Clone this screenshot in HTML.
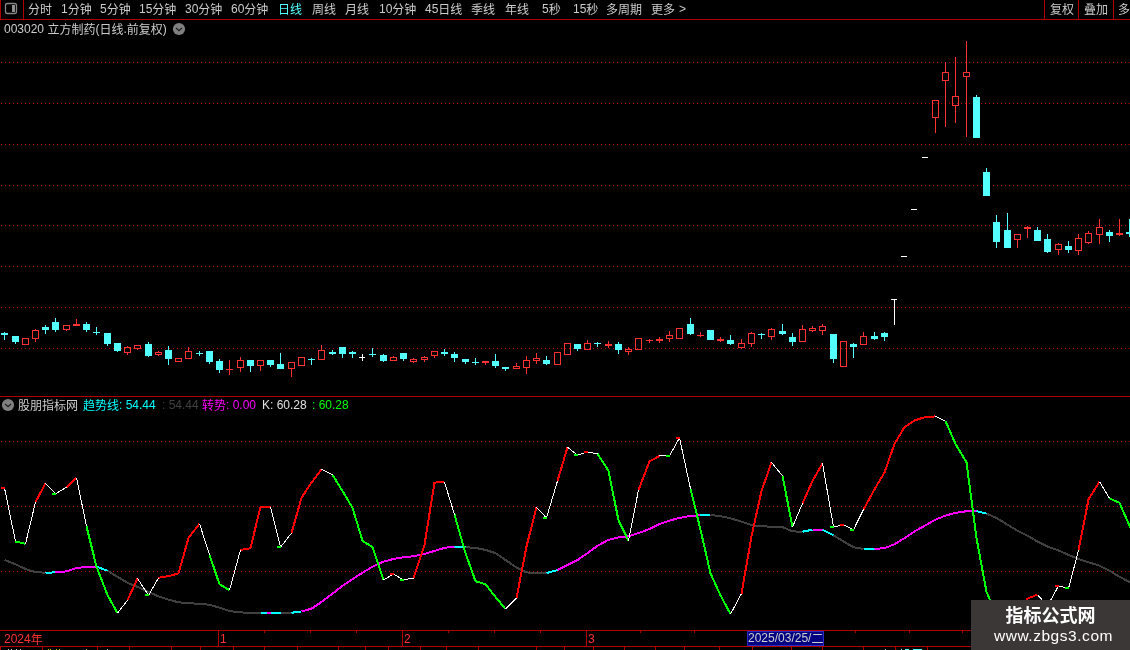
<!DOCTYPE html><html><head><meta charset="utf-8"><title>chart</title><style>
html,body{margin:0;padding:0;background:#000;}
body{width:1130px;height:650px;position:relative;overflow:hidden;font-family:"Liberation Sans","Noto Sans CJK SC",sans-serif;font-size:12px;color:#cccccc;}
.t{position:absolute;white-space:nowrap;line-height:14px;height:14px;}
.z{position:relative;top:1px;}
.wm{position:absolute;left:971px;top:600px;width:159px;height:50px;background:#3b3737;}
.wm1{position:absolute;left:0;width:159px;top:5px;text-align:center;font-size:18px;line-height:22px;font-weight:bold;color:#fff;}
.wm2{position:absolute;left:3px;width:159px;top:27px;text-align:center;font-size:15.5px;letter-spacing:0.55px;line-height:18px;color:#fff;}
.date{position:absolute;left:747px;top:631px;width:75px;height:13px;background:#000080;border:1px solid #2828c8;color:#d0d0d0;line-height:13px;white-space:nowrap;}
</style></head><body>
<svg width="1130" height="650" viewBox="0 0 1130 650" shape-rendering="crispEdges" style="position:absolute;left:0;top:0">
<line x1="1" y1="62.5" x2="1130" y2="62.5" stroke="#b00000" stroke-width="1" stroke-dasharray="1 3"/>
<line x1="1" y1="103.5" x2="1130" y2="103.5" stroke="#b00000" stroke-width="1" stroke-dasharray="1 3"/>
<line x1="1" y1="144.5" x2="1130" y2="144.5" stroke="#b00000" stroke-width="1" stroke-dasharray="1 3"/>
<line x1="1" y1="185.5" x2="1130" y2="185.5" stroke="#b00000" stroke-width="1" stroke-dasharray="1 3"/>
<line x1="1" y1="225.5" x2="1130" y2="225.5" stroke="#b00000" stroke-width="1" stroke-dasharray="1 3"/>
<line x1="1" y1="266.5" x2="1130" y2="266.5" stroke="#b00000" stroke-width="1" stroke-dasharray="1 3"/>
<line x1="1" y1="307.5" x2="1130" y2="307.5" stroke="#b00000" stroke-width="1" stroke-dasharray="1 3"/>
<line x1="1" y1="348.5" x2="1130" y2="348.5" stroke="#b00000" stroke-width="1" stroke-dasharray="1 3"/>
<line x1="1" y1="441.5" x2="1130" y2="441.5" stroke="#b00000" stroke-width="1" stroke-dasharray="1 3"/>
<line x1="1" y1="506.5" x2="1130" y2="506.5" stroke="#b00000" stroke-width="1" stroke-dasharray="1 3"/>
<line x1="1" y1="571.5" x2="1130" y2="571.5" stroke="#b00000" stroke-width="1" stroke-dasharray="1 3"/>
<rect x="4" y="332" width="1" height="8" fill="#54ffff"/>
<rect x="1" y="333" width="7" height="2" fill="#54ffff"/>
<rect x="15" y="336" width="1" height="8" fill="#54ffff"/>
<rect x="12" y="336" width="7" height="6" fill="#54ffff"/>
<rect x="22.5" y="338.5" width="6" height="6" fill="none" stroke="#ff3232" stroke-width="1"/>
<rect x="35" y="329" width="1" height="1" fill="#ff3232"/>
<rect x="35" y="339" width="1" height="3" fill="#ff3232"/>
<rect x="32.5" y="330.5" width="6" height="8" fill="none" stroke="#ff3232" stroke-width="1"/>
<rect x="45" y="325" width="1" height="9" fill="#54ffff"/>
<rect x="42" y="327" width="7" height="3" fill="#54ffff"/>
<rect x="55" y="318" width="1" height="14" fill="#54ffff"/>
<rect x="52" y="322" width="7" height="8" fill="#54ffff"/>
<rect x="66" y="330" width="1" height="1" fill="#ff3232"/>
<rect x="63.5" y="325.5" width="6" height="4" fill="none" stroke="#ff3232" stroke-width="1"/>
<rect x="76" y="319" width="1" height="7" fill="#ff3232"/>
<rect x="73" y="324" width="7" height="2" fill="#ff3232"/>
<rect x="86" y="322" width="1" height="10" fill="#54ffff"/>
<rect x="83" y="324" width="7" height="6" fill="#54ffff"/>
<rect x="96" y="327" width="1" height="8" fill="#54ffff"/>
<rect x="93" y="332" width="7" height="1" fill="#54ffff"/>
<rect x="107" y="333" width="1" height="13" fill="#54ffff"/>
<rect x="104" y="333" width="7" height="11" fill="#54ffff"/>
<rect x="117" y="343" width="1" height="9" fill="#54ffff"/>
<rect x="114" y="343" width="7" height="8" fill="#54ffff"/>
<rect x="127" y="346" width="1" height="1" fill="#ff3232"/>
<rect x="127" y="353" width="1" height="2" fill="#ff3232"/>
<rect x="124.5" y="347.5" width="6" height="5" fill="none" stroke="#ff3232" stroke-width="1"/>
<rect x="137" y="349" width="1" height="1" fill="#ff3232"/>
<rect x="134.5" y="345.5" width="6" height="3" fill="none" stroke="#ff3232" stroke-width="1"/>
<rect x="148" y="342" width="1" height="15" fill="#54ffff"/>
<rect x="145" y="344" width="7" height="12" fill="#54ffff"/>
<rect x="158" y="351" width="1" height="1" fill="#ff3232"/>
<rect x="158" y="355" width="1" height="1" fill="#ff3232"/>
<rect x="155.5" y="352.5" width="6" height="2" fill="none" stroke="#ff3232" stroke-width="1"/>
<rect x="168" y="346" width="1" height="19" fill="#54ffff"/>
<rect x="165" y="350" width="7" height="9" fill="#54ffff"/>
<rect x="175.5" y="358.5" width="6" height="3" fill="none" stroke="#ff3232" stroke-width="1"/>
<rect x="188" y="347" width="1" height="4" fill="#ff3232"/>
<rect x="185.5" y="351.5" width="6" height="7" fill="none" stroke="#ff3232" stroke-width="1"/>
<rect x="199" y="351" width="1" height="5" fill="#54ffff"/>
<rect x="196" y="353" width="7" height="1" fill="#54ffff"/>
<rect x="209" y="351" width="1" height="13" fill="#54ffff"/>
<rect x="206" y="351" width="7" height="11" fill="#54ffff"/>
<rect x="219" y="359" width="1" height="14" fill="#54ffff"/>
<rect x="216" y="361" width="7" height="9" fill="#54ffff"/>
<rect x="229" y="360" width="1" height="15" fill="#ff3232"/>
<rect x="226" y="369" width="7" height="1" fill="#ff3232"/>
<rect x="240" y="357" width="1" height="3" fill="#ff3232"/>
<rect x="240" y="368" width="1" height="4" fill="#ff3232"/>
<rect x="237.5" y="360.5" width="6" height="7" fill="none" stroke="#ff3232" stroke-width="1"/>
<rect x="250" y="360" width="1" height="12" fill="#54ffff"/>
<rect x="247" y="360" width="7" height="6" fill="#54ffff"/>
<rect x="260" y="366" width="1" height="5" fill="#ff3232"/>
<rect x="257.5" y="360.5" width="6" height="5" fill="none" stroke="#ff3232" stroke-width="1"/>
<rect x="270" y="360" width="1" height="7" fill="#54ffff"/>
<rect x="267" y="360" width="7" height="5" fill="#54ffff"/>
<rect x="280" y="353" width="1" height="16" fill="#54ffff"/>
<rect x="277" y="364" width="7" height="5" fill="#54ffff"/>
<rect x="291" y="369" width="1" height="8" fill="#ff3232"/>
<rect x="288.5" y="362.5" width="6" height="6" fill="none" stroke="#ff3232" stroke-width="1"/>
<rect x="298.5" y="357.5" width="6" height="8" fill="none" stroke="#ff3232" stroke-width="1"/>
<rect x="311" y="358" width="1" height="7" fill="#54ffff"/>
<rect x="308" y="359" width="7" height="1" fill="#54ffff"/>
<rect x="321" y="345" width="1" height="5" fill="#ff3232"/>
<rect x="318.5" y="350.5" width="6" height="9" fill="none" stroke="#ff3232" stroke-width="1"/>
<rect x="332" y="350" width="1" height="5" fill="#54ffff"/>
<rect x="329" y="352" width="7" height="2" fill="#54ffff"/>
<rect x="342" y="347" width="1" height="11" fill="#54ffff"/>
<rect x="339" y="347" width="7" height="7" fill="#54ffff"/>
<rect x="352" y="351" width="1" height="7" fill="#54ffff"/>
<rect x="349" y="352" width="7" height="2" fill="#54ffff"/>
<rect x="362" y="354" width="1" height="7" fill="#ffffff"/>
<rect x="359" y="357" width="6" height="1" fill="#ffffff"/>
<rect x="372" y="348" width="1" height="9" fill="#54ffff"/>
<rect x="369" y="354" width="7" height="1" fill="#54ffff"/>
<rect x="383" y="354" width="1" height="8" fill="#54ffff"/>
<rect x="380" y="355" width="7" height="6" fill="#54ffff"/>
<rect x="393" y="356" width="1" height="1" fill="#ff3232"/>
<rect x="390.5" y="357.5" width="6" height="3" fill="none" stroke="#ff3232" stroke-width="1"/>
<rect x="403" y="353" width="1" height="8" fill="#54ffff"/>
<rect x="400" y="353" width="7" height="6" fill="#54ffff"/>
<rect x="413" y="358" width="1" height="1" fill="#ff3232"/>
<rect x="413" y="362" width="1" height="1" fill="#ff3232"/>
<rect x="410.5" y="359.5" width="6" height="2" fill="none" stroke="#ff3232" stroke-width="1"/>
<rect x="424" y="356" width="1" height="1" fill="#ff3232"/>
<rect x="424" y="360" width="1" height="2" fill="#ff3232"/>
<rect x="421.5" y="357.5" width="6" height="2" fill="none" stroke="#ff3232" stroke-width="1"/>
<rect x="434" y="356" width="1" height="2" fill="#ff3232"/>
<rect x="431.5" y="351.5" width="6" height="4" fill="none" stroke="#ff3232" stroke-width="1"/>
<rect x="444" y="349" width="1" height="7" fill="#54ffff"/>
<rect x="441" y="352" width="7" height="2" fill="#54ffff"/>
<rect x="454" y="352" width="1" height="10" fill="#54ffff"/>
<rect x="451" y="354" width="7" height="4" fill="#54ffff"/>
<rect x="465" y="359" width="1" height="5" fill="#54ffff"/>
<rect x="462" y="359" width="7" height="3" fill="#54ffff"/>
<rect x="475" y="358" width="1" height="7" fill="#54ffff"/>
<rect x="472" y="362" width="7" height="1" fill="#54ffff"/>
<rect x="485" y="361" width="1" height="4" fill="#ff3232"/>
<rect x="482" y="361" width="7" height="2" fill="#ff3232"/>
<rect x="495" y="354" width="1" height="14" fill="#54ffff"/>
<rect x="492" y="361" width="7" height="5" fill="#54ffff"/>
<rect x="505" y="367" width="1" height="4" fill="#54ffff"/>
<rect x="502" y="367" width="7" height="2" fill="#54ffff"/>
<rect x="516" y="363" width="1" height="3" fill="#ff3232"/>
<rect x="513.5" y="366.5" width="6" height="2" fill="none" stroke="#ff3232" stroke-width="1"/>
<rect x="526" y="356" width="1" height="4" fill="#ff3232"/>
<rect x="526" y="368" width="1" height="6" fill="#ff3232"/>
<rect x="523.5" y="360.5" width="6" height="7" fill="none" stroke="#ff3232" stroke-width="1"/>
<rect x="536" y="353" width="1" height="5" fill="#ff3232"/>
<rect x="536" y="361" width="1" height="3" fill="#ff3232"/>
<rect x="533.5" y="358.5" width="6" height="2" fill="none" stroke="#ff3232" stroke-width="1"/>
<rect x="546" y="356" width="1" height="9" fill="#54ffff"/>
<rect x="543" y="360" width="7" height="4" fill="#54ffff"/>
<rect x="554.5" y="352.5" width="6" height="12" fill="none" stroke="#ff3232" stroke-width="1"/>
<rect x="564.5" y="343.5" width="6" height="11" fill="none" stroke="#ff3232" stroke-width="1"/>
<rect x="577" y="344" width="1" height="7" fill="#54ffff"/>
<rect x="574" y="344" width="7" height="5" fill="#54ffff"/>
<rect x="587" y="340" width="1" height="3" fill="#ff3232"/>
<rect x="584.5" y="343.5" width="6" height="6" fill="none" stroke="#ff3232" stroke-width="1"/>
<rect x="597" y="342" width="1" height="5" fill="#54ffff"/>
<rect x="594" y="343" width="7" height="1" fill="#54ffff"/>
<rect x="608" y="341" width="1" height="7" fill="#ff3232"/>
<rect x="605" y="344" width="7" height="2" fill="#ff3232"/>
<rect x="618" y="342" width="1" height="12" fill="#54ffff"/>
<rect x="615" y="344" width="7" height="6" fill="#54ffff"/>
<rect x="628" y="347" width="1" height="2" fill="#ff3232"/>
<rect x="628" y="352" width="1" height="3" fill="#ff3232"/>
<rect x="625.5" y="349.5" width="6" height="2" fill="none" stroke="#ff3232" stroke-width="1"/>
<rect x="635.5" y="338.5" width="6" height="11" fill="none" stroke="#ff3232" stroke-width="1"/>
<rect x="649" y="339" width="1" height="4" fill="#ff3232"/>
<rect x="646" y="340" width="7" height="1" fill="#ff3232"/>
<rect x="659" y="337" width="1" height="6" fill="#ff3232"/>
<rect x="656" y="339" width="7" height="2" fill="#ff3232"/>
<rect x="669" y="331" width="1" height="4" fill="#ff3232"/>
<rect x="669" y="339" width="1" height="3" fill="#ff3232"/>
<rect x="666.5" y="335.5" width="6" height="3" fill="none" stroke="#ff3232" stroke-width="1"/>
<rect x="676.5" y="328.5" width="6" height="10" fill="none" stroke="#ff3232" stroke-width="1"/>
<rect x="690" y="318" width="1" height="17" fill="#54ffff"/>
<rect x="687" y="324" width="7" height="10" fill="#54ffff"/>
<rect x="700" y="332" width="1" height="5" fill="#ff3232"/>
<rect x="697" y="335" width="7" height="1" fill="#ff3232"/>
<rect x="710" y="330" width="1" height="10" fill="#54ffff"/>
<rect x="707" y="330" width="7" height="10" fill="#54ffff"/>
<rect x="720" y="337" width="1" height="5" fill="#ff3232"/>
<rect x="717" y="339" width="7" height="2" fill="#ff3232"/>
<rect x="730" y="335" width="1" height="10" fill="#54ffff"/>
<rect x="727" y="340" width="7" height="4" fill="#54ffff"/>
<rect x="741" y="339" width="1" height="4" fill="#ff3232"/>
<rect x="741" y="348" width="1" height="1" fill="#ff3232"/>
<rect x="738.5" y="343.5" width="6" height="4" fill="none" stroke="#ff3232" stroke-width="1"/>
<rect x="751" y="332" width="1" height="1" fill="#ff3232"/>
<rect x="751" y="344" width="1" height="3" fill="#ff3232"/>
<rect x="748.5" y="333.5" width="6" height="10" fill="none" stroke="#ff3232" stroke-width="1"/>
<rect x="761" y="333" width="1" height="6" fill="#54ffff"/>
<rect x="758" y="334" width="7" height="1" fill="#54ffff"/>
<rect x="771" y="328" width="1" height="1" fill="#ff3232"/>
<rect x="771" y="337" width="1" height="3" fill="#ff3232"/>
<rect x="768.5" y="329.5" width="6" height="7" fill="none" stroke="#ff3232" stroke-width="1"/>
<rect x="782" y="324" width="1" height="11" fill="#54ffff"/>
<rect x="779" y="331" width="7" height="3" fill="#54ffff"/>
<rect x="792" y="333" width="1" height="13" fill="#54ffff"/>
<rect x="789" y="337" width="7" height="5" fill="#54ffff"/>
<rect x="802" y="325" width="1" height="4" fill="#ff3232"/>
<rect x="799.5" y="329.5" width="6" height="12" fill="none" stroke="#ff3232" stroke-width="1"/>
<rect x="812" y="326" width="1" height="2" fill="#ff3232"/>
<rect x="812" y="331" width="1" height="1" fill="#ff3232"/>
<rect x="809.5" y="328.5" width="6" height="2" fill="none" stroke="#ff3232" stroke-width="1"/>
<rect x="822" y="324" width="1" height="2" fill="#ff3232"/>
<rect x="822" y="331" width="1" height="4" fill="#ff3232"/>
<rect x="819.5" y="326.5" width="6" height="4" fill="none" stroke="#ff3232" stroke-width="1"/>
<rect x="833" y="334" width="1" height="29" fill="#54ffff"/>
<rect x="830" y="334" width="7" height="25" fill="#54ffff"/>
<rect x="840.5" y="341.5" width="6" height="25" fill="none" stroke="#ff3232" stroke-width="1"/>
<rect x="853" y="343" width="1" height="15" fill="#54ffff"/>
<rect x="850" y="344" width="7" height="3" fill="#54ffff"/>
<rect x="863" y="332" width="1" height="4" fill="#ff3232"/>
<rect x="860.5" y="336.5" width="6" height="8" fill="none" stroke="#ff3232" stroke-width="1"/>
<rect x="874" y="332" width="1" height="8" fill="#54ffff"/>
<rect x="871" y="336" width="7" height="3" fill="#54ffff"/>
<rect x="884" y="332" width="1" height="9" fill="#54ffff"/>
<rect x="881" y="333" width="7" height="4" fill="#54ffff"/>
<rect x="894" y="299" width="1" height="26" fill="#ffffff"/>
<rect x="891" y="299" width="6" height="1" fill="#ffffff"/>
<rect x="901" y="256" width="6" height="1" fill="#ffffff"/>
<rect x="911" y="209" width="6" height="1" fill="#ffffff"/>
<rect x="922" y="157" width="6" height="1" fill="#ffffff"/>
<rect x="935" y="118" width="1" height="15" fill="#ff3232"/>
<rect x="932.5" y="100.5" width="6" height="17" fill="none" stroke="#ff3232" stroke-width="1"/>
<rect x="945" y="62" width="1" height="10" fill="#ff3232"/>
<rect x="945" y="81" width="1" height="46" fill="#ff3232"/>
<rect x="942.5" y="72.5" width="6" height="8" fill="none" stroke="#ff3232" stroke-width="1"/>
<rect x="955" y="57" width="1" height="39" fill="#ff3232"/>
<rect x="955" y="106" width="1" height="17" fill="#ff3232"/>
<rect x="952.5" y="96.5" width="6" height="9" fill="none" stroke="#ff3232" stroke-width="1"/>
<rect x="966" y="41" width="1" height="31" fill="#ff3232"/>
<rect x="966" y="77" width="1" height="60" fill="#ff3232"/>
<rect x="963.5" y="72.5" width="6" height="4" fill="none" stroke="#ff3232" stroke-width="1"/>
<rect x="976" y="95" width="1" height="43" fill="#54ffff"/>
<rect x="973" y="97" width="7" height="41" fill="#54ffff"/>
<rect x="986" y="168" width="1" height="28" fill="#54ffff"/>
<rect x="983" y="172" width="7" height="24" fill="#54ffff"/>
<rect x="996" y="215" width="1" height="33" fill="#54ffff"/>
<rect x="993" y="222" width="7" height="20" fill="#54ffff"/>
<rect x="1007" y="213" width="1" height="35" fill="#54ffff"/>
<rect x="1004" y="230" width="7" height="18" fill="#54ffff"/>
<rect x="1017" y="240" width="1" height="8" fill="#ff3232"/>
<rect x="1014.5" y="234.5" width="6" height="5" fill="none" stroke="#ff3232" stroke-width="1"/>
<rect x="1027" y="226" width="1" height="12" fill="#ff3232"/>
<rect x="1024" y="227" width="7" height="2" fill="#ff3232"/>
<rect x="1037" y="227" width="1" height="14" fill="#54ffff"/>
<rect x="1034" y="230" width="7" height="11" fill="#54ffff"/>
<rect x="1047" y="234" width="1" height="19" fill="#54ffff"/>
<rect x="1044" y="239" width="7" height="13" fill="#54ffff"/>
<rect x="1058" y="243" width="1" height="1" fill="#ff3232"/>
<rect x="1058" y="250" width="1" height="5" fill="#ff3232"/>
<rect x="1055.5" y="244.5" width="6" height="5" fill="none" stroke="#ff3232" stroke-width="1"/>
<rect x="1068" y="241" width="1" height="12" fill="#54ffff"/>
<rect x="1065" y="246" width="7" height="4" fill="#54ffff"/>
<rect x="1078" y="234" width="1" height="4" fill="#ff3232"/>
<rect x="1078" y="251" width="1" height="4" fill="#ff3232"/>
<rect x="1075.5" y="238.5" width="6" height="12" fill="none" stroke="#ff3232" stroke-width="1"/>
<rect x="1088" y="231" width="1" height="2" fill="#ff3232"/>
<rect x="1088" y="243" width="1" height="1" fill="#ff3232"/>
<rect x="1085.5" y="233.5" width="6" height="9" fill="none" stroke="#ff3232" stroke-width="1"/>
<rect x="1099" y="219" width="1" height="8" fill="#ff3232"/>
<rect x="1099" y="235" width="1" height="9" fill="#ff3232"/>
<rect x="1096.5" y="227.5" width="6" height="7" fill="none" stroke="#ff3232" stroke-width="1"/>
<rect x="1109" y="230" width="1" height="12" fill="#54ffff"/>
<rect x="1106" y="232" width="7" height="4" fill="#54ffff"/>
<rect x="1119" y="219" width="1" height="17" fill="#ff3232"/>
<rect x="1116" y="233" width="7" height="2" fill="#ff3232"/>
<rect x="1129" y="219" width="1" height="18" fill="#54ffff"/>
<rect x="1126" y="232" width="7" height="2" fill="#54ffff"/>
<polyline points="4.5,560 15.5,564.3 25.5,569 35.5,572.1 45.5,572.7" fill="none" stroke="#404040" stroke-width="2" stroke-linejoin="round"/>
<polyline points="45.5,572.7 55.5,572.4" fill="none" stroke="#00ffff" stroke-width="2" stroke-linejoin="round"/>
<polyline points="55.5,572.4 66.5,571.4 76.5,568 86.5,567 96.5,566.7" fill="none" stroke="#ff00ff" stroke-width="2" stroke-linejoin="round"/>
<polyline points="96.5,566.7 107.5,570.7" fill="none" stroke="#00ffff" stroke-width="2" stroke-linejoin="round"/>
<polyline points="107.5,570.7 117.5,576.8 127.5,582.8 137.5,586.9 148.5,591.9 158.5,596.3 168.5,599.6 178.5,602.3 188.5,603 199.5,604 209.5,604.7 219.5,607.7 229.5,611.1 240.5,612.4 250.5,612.8 260.5,612.8" fill="none" stroke="#404040" stroke-width="2" stroke-linejoin="round"/>
<polyline points="260.5,612.8 270.5,612.8 280.5,612.8" fill="none" stroke="#00ffff" stroke-width="2" stroke-linejoin="round"/>
<polyline points="280.5,612.8 291.5,612.8" fill="none" stroke="#404040" stroke-width="2" stroke-linejoin="round"/>
<polyline points="291.5,612.8 301.5,611.4" fill="none" stroke="#00ffff" stroke-width="2" stroke-linejoin="round"/>
<polyline points="301.5,611.4 311.5,608.7 321.5,602 332.5,593.6 342.5,585.9 352.5,579.1 362.5,572.7 372.5,566.7 383.5,561.6 393.5,559 403.5,557.3 413.5,556.3 424.5,553.9 434.5,550.9 444.5,547.9 454.5,546.5" fill="none" stroke="#ff00ff" stroke-width="2" stroke-linejoin="round"/>
<polyline points="454.5,546.5 465.5,547.2" fill="none" stroke="#00ffff" stroke-width="2" stroke-linejoin="round"/>
<polyline points="465.5,547.2 475.5,547.9 485.5,549.9 495.5,553.2 505.5,560 516.5,567.4 526.5,572.4 536.5,573.1 546.5,573.1" fill="none" stroke="#404040" stroke-width="2" stroke-linejoin="round"/>
<polyline points="546.5,573.1 557.5,570" fill="none" stroke="#00ffff" stroke-width="2" stroke-linejoin="round"/>
<polyline points="557.5,570 567.5,565 577.5,560 587.5,553.2 597.5,545.8 608.5,539.8 618.5,537.4 628.5,536.4 638.5,533.1 649.5,529 659.5,524 669.5,520.6 679.5,517.9 690.5,515.9 700.5,515.2" fill="none" stroke="#ff00ff" stroke-width="2" stroke-linejoin="round"/>
<polyline points="700.5,515.2 710.5,514.9" fill="none" stroke="#00ffff" stroke-width="2" stroke-linejoin="round"/>
<polyline points="710.5,514.9 720.5,516.2 730.5,518.3 741.5,521.6 751.5,525 761.5,526.3 771.5,526.7 782.5,527 792.5,531.4 802.5,531.7" fill="none" stroke="#404040" stroke-width="2" stroke-linejoin="round"/>
<polyline points="802.5,531.7 812.5,529.7" fill="none" stroke="#00ffff" stroke-width="2" stroke-linejoin="round"/>
<polyline points="812.5,529.7 822.5,529.7" fill="none" stroke="#ff00ff" stroke-width="2" stroke-linejoin="round"/>
<polyline points="822.5,529.7 833.5,535.4" fill="none" stroke="#00ffff" stroke-width="2" stroke-linejoin="round"/>
<polyline points="833.5,535.4 843.5,541.5 853.5,547.2 863.5,548.9" fill="none" stroke="#404040" stroke-width="2" stroke-linejoin="round"/>
<polyline points="863.5,548.9 874.5,548.9" fill="none" stroke="#00ffff" stroke-width="2" stroke-linejoin="round"/>
<polyline points="874.5,548.9 884.5,548.2 894.5,544.2 904.5,538.1 914.5,531.4 925.5,525.3 935.5,519.6 945.5,515.6 955.5,512.9 966.5,511.2 976.5,511.2" fill="none" stroke="#ff00ff" stroke-width="2" stroke-linejoin="round"/>
<polyline points="976.5,511.2 986.5,513.6" fill="none" stroke="#00ffff" stroke-width="2" stroke-linejoin="round"/>
<polyline points="986.5,513.6 996.5,517.9 1007.5,524.7 1017.5,530.7 1027.5,535.7 1037.5,541.5 1047.5,546.5 1058.5,550.5 1068.5,554.9 1078.5,559 1088.5,562.3 1099.5,565.7 1109.5,570.7 1119.5,576.8 1130.5,582.5" fill="none" stroke="#404040" stroke-width="2" stroke-linejoin="round"/>
<rect x="267" y="612" width="4" height="2" fill="#ff00ff"/>
<polyline points="4.5,488 15.5,541.5" fill="none" stroke="#ffffff" stroke-width="1" stroke-linejoin="round"/>
<polyline points="15.5,541.5 25.5,543.8" fill="none" stroke="#00ff00" stroke-width="2" stroke-linejoin="round"/>
<polyline points="25.5,543.8 35.5,502.1" fill="none" stroke="#ffffff" stroke-width="1" stroke-linejoin="round"/>
<polyline points="35.5,502.1 45.5,483.3" fill="none" stroke="#ff0000" stroke-width="2" stroke-linejoin="round"/>
<polyline points="45.5,483.3 55.5,493.7 66.5,487.3" fill="none" stroke="#ffffff" stroke-width="1" stroke-linejoin="round"/>
<polyline points="66.5,487.3 76.5,477.6" fill="none" stroke="#ff0000" stroke-width="2" stroke-linejoin="round"/>
<polyline points="76.5,477.6 86.5,526.3" fill="none" stroke="#ffffff" stroke-width="1" stroke-linejoin="round"/>
<polyline points="86.5,526.3 96.5,566.7 107.5,595 117.5,613.1" fill="none" stroke="#00ff00" stroke-width="2" stroke-linejoin="round"/>
<polyline points="117.5,613.1 127.5,600.3" fill="none" stroke="#ffffff" stroke-width="1" stroke-linejoin="round"/>
<polyline points="127.5,600.3 137.5,578.5" fill="none" stroke="#ff0000" stroke-width="2" stroke-linejoin="round"/>
<polyline points="137.5,578.5 148.5,595.3 158.5,577.8" fill="none" stroke="#ffffff" stroke-width="1" stroke-linejoin="round"/>
<polyline points="158.5,577.8 168.5,576.1 178.5,573.4 188.5,538.1 199.5,523.6" fill="none" stroke="#ff0000" stroke-width="2" stroke-linejoin="round"/>
<polyline points="199.5,523.6 209.5,554.9" fill="none" stroke="#ffffff" stroke-width="1" stroke-linejoin="round"/>
<polyline points="209.5,554.9 219.5,584.2 229.5,590.2" fill="none" stroke="#00ff00" stroke-width="2" stroke-linejoin="round"/>
<polyline points="229.5,590.2 240.5,549.9" fill="none" stroke="#ffffff" stroke-width="1" stroke-linejoin="round"/>
<polyline points="240.5,549.9 250.5,548.2 260.5,506.8 270.5,506.8" fill="none" stroke="#ff0000" stroke-width="2" stroke-linejoin="round"/>
<polyline points="270.5,506.8 280.5,547.2 291.5,533.1" fill="none" stroke="#ffffff" stroke-width="1" stroke-linejoin="round"/>
<polyline points="291.5,533.1 301.5,497.8 311.5,482.6 321.5,469.2" fill="none" stroke="#ff0000" stroke-width="2" stroke-linejoin="round"/>
<polyline points="321.5,469.2 332.5,474.9" fill="none" stroke="#ffffff" stroke-width="1" stroke-linejoin="round"/>
<polyline points="332.5,474.9 342.5,491 352.5,507.8 362.5,540.8 372.5,547.2 383.5,580.1" fill="none" stroke="#00ff00" stroke-width="2" stroke-linejoin="round"/>
<polyline points="383.5,580.1 393.5,574.1 403.5,579.8 413.5,578.1" fill="none" stroke="#ffffff" stroke-width="1" stroke-linejoin="round"/>
<polyline points="413.5,578.1 424.5,544.8 434.5,482.6 444.5,482" fill="none" stroke="#ff0000" stroke-width="2" stroke-linejoin="round"/>
<polyline points="444.5,482 454.5,514.6" fill="none" stroke="#ffffff" stroke-width="1" stroke-linejoin="round"/>
<polyline points="454.5,514.6 465.5,553.2 475.5,581.2 485.5,584.2 495.5,597 505.5,609.1" fill="none" stroke="#00ff00" stroke-width="2" stroke-linejoin="round"/>
<polyline points="505.5,609.1 516.5,598" fill="none" stroke="#ffffff" stroke-width="1" stroke-linejoin="round"/>
<polyline points="516.5,598 526.5,546.5 536.5,507.2" fill="none" stroke="#ff0000" stroke-width="2" stroke-linejoin="round"/>
<polyline points="536.5,507.2 546.5,517.9 557.5,480.9" fill="none" stroke="#ffffff" stroke-width="1" stroke-linejoin="round"/>
<polyline points="557.5,480.9 567.5,447.3" fill="none" stroke="#ff0000" stroke-width="2" stroke-linejoin="round"/>
<polyline points="567.5,447.3 577.5,455 587.5,452 597.5,453.7" fill="none" stroke="#ffffff" stroke-width="1" stroke-linejoin="round"/>
<polyline points="597.5,453.7 608.5,470.8 618.5,520.3 628.5,540.8" fill="none" stroke="#00ff00" stroke-width="2" stroke-linejoin="round"/>
<polyline points="628.5,540.8 638.5,490" fill="none" stroke="#ffffff" stroke-width="1" stroke-linejoin="round"/>
<polyline points="638.5,490 649.5,461.4 659.5,456" fill="none" stroke="#ff0000" stroke-width="2" stroke-linejoin="round"/>
<polyline points="659.5,456 669.5,455.7 679.5,437.9 690.5,488.7" fill="none" stroke="#ffffff" stroke-width="1" stroke-linejoin="round"/>
<polyline points="690.5,488.7 700.5,529.7 710.5,573.4 720.5,595.3 730.5,614.1" fill="none" stroke="#00ff00" stroke-width="2" stroke-linejoin="round"/>
<polyline points="730.5,614.1 741.5,593.6" fill="none" stroke="#ffffff" stroke-width="1" stroke-linejoin="round"/>
<polyline points="741.5,593.6 751.5,536.4 761.5,491 771.5,462.4" fill="none" stroke="#ff0000" stroke-width="2" stroke-linejoin="round"/>
<polyline points="771.5,462.4 782.5,475.9" fill="none" stroke="#ffffff" stroke-width="1" stroke-linejoin="round"/>
<polyline points="782.5,475.9 792.5,527" fill="none" stroke="#00ff00" stroke-width="2" stroke-linejoin="round"/>
<polyline points="792.5,527 802.5,503.5" fill="none" stroke="#ffffff" stroke-width="1" stroke-linejoin="round"/>
<polyline points="802.5,503.5 812.5,480.9 822.5,463.5" fill="none" stroke="#ff0000" stroke-width="2" stroke-linejoin="round"/>
<polyline points="822.5,463.5 833.5,527 843.5,524.7 853.5,529.7 863.5,509.5" fill="none" stroke="#ffffff" stroke-width="1" stroke-linejoin="round"/>
<polyline points="863.5,509.5 874.5,489.3 884.5,472.5 894.5,443.9 904.5,427.1 914.5,420.4 925.5,417 935.5,416.4" fill="none" stroke="#ff0000" stroke-width="2" stroke-linejoin="round"/>
<polyline points="935.5,416.4 945.5,421.1" fill="none" stroke="#ffffff" stroke-width="1" stroke-linejoin="round"/>
<polyline points="945.5,421.1 955.5,443.9 966.5,462.4 976.5,538.1 986.5,591.9 996.5,615 1007.5,618" fill="none" stroke="#00ff00" stroke-width="2" stroke-linejoin="round"/>
<polyline points="1007.5,618 1017.5,612" fill="none" stroke="#ffffff" stroke-width="1" stroke-linejoin="round"/>
<polyline points="1017.5,612 1027.5,598.6 1037.5,594.6" fill="none" stroke="#ff0000" stroke-width="2" stroke-linejoin="round"/>
<polyline points="1037.5,594.6 1047.5,606 1058.5,585.9 1068.5,588.5 1078.5,550.5" fill="none" stroke="#ffffff" stroke-width="1" stroke-linejoin="round"/>
<polyline points="1078.5,550.5 1088.5,499.4 1099.5,481.6" fill="none" stroke="#ff0000" stroke-width="2" stroke-linejoin="round"/>
<polyline points="1099.5,481.6 1109.5,498.4" fill="none" stroke="#ffffff" stroke-width="1" stroke-linejoin="round"/>
<polyline points="1109.5,498.4 1119.5,502.8 1130.5,528" fill="none" stroke="#00ff00" stroke-width="2" stroke-linejoin="round"/>
<rect x="1" y="487" width="4" height="2" fill="#ff0000"/>
<rect x="52" y="493" width="4" height="2" fill="#00ff00"/>
<rect x="145" y="594" width="4" height="2" fill="#00ff00"/>
<rect x="277" y="546" width="4" height="2" fill="#00ff00"/>
<rect x="390" y="573" width="4" height="2" fill="#ff0000"/>
<rect x="400" y="579" width="4" height="2" fill="#00ff00"/>
<rect x="543" y="517" width="4" height="2" fill="#00ff00"/>
<rect x="574" y="454" width="4" height="2" fill="#00ff00"/>
<rect x="584" y="451" width="4" height="2" fill="#ff0000"/>
<rect x="666" y="455" width="4" height="2" fill="#00ff00"/>
<rect x="676" y="437" width="4" height="2" fill="#ff0000"/>
<rect x="830" y="526" width="4" height="2" fill="#00ff00"/>
<rect x="840" y="524" width="4" height="2" fill="#ff0000"/>
<rect x="850" y="529" width="4" height="2" fill="#00ff00"/>
<rect x="1055" y="585" width="4" height="2" fill="#ff0000"/>
<rect x="1065" y="587" width="4" height="2" fill="#00ff00"/>
<rect x="0" y="19" width="1130" height="1" fill="#b00000"/>
<rect x="0" y="0" width="1" height="20" fill="#b00000"/>
<rect x="23" y="0" width="1" height="20" fill="#b00000"/>
<rect x="1044" y="0" width="1" height="20" fill="#b00000"/>
<rect x="1078" y="0" width="1" height="20" fill="#b00000"/>
<rect x="1113" y="0" width="1" height="20" fill="#b00000"/>
<rect x="0" y="396" width="1130" height="1" fill="#b00000"/>
<rect x="0" y="630" width="1130" height="1" fill="#b00000"/>
<rect x="0" y="646" width="1130" height="1" fill="#b00000"/>
<rect x="218" y="630" width="1" height="17" fill="#b00000"/>
<rect x="402" y="630" width="1" height="17" fill="#b00000"/>
<rect x="586" y="630" width="1" height="17" fill="#b00000"/>
<rect x="264" y="630" width="1" height="3" fill="#b00000"/>
<rect x="310" y="630" width="1" height="3" fill="#b00000"/>
<rect x="356" y="630" width="1" height="3" fill="#b00000"/>
<rect x="448" y="630" width="1" height="3" fill="#b00000"/>
<rect x="494" y="630" width="1" height="3" fill="#b00000"/>
<rect x="540" y="630" width="1" height="3" fill="#b00000"/>
<rect x="640" y="630" width="1" height="3" fill="#b00000"/>
<rect x="694" y="630" width="1" height="3" fill="#b00000"/>
<rect x="855" y="630" width="1" height="3" fill="#b00000"/>
<rect x="909" y="630" width="1" height="3" fill="#b00000"/>
<rect x="962" y="630" width="1" height="3" fill="#b00000"/>
<rect x="0" y="646" width="1" height="4" fill="#b00000"/>
<rect x="42" y="646" width="1" height="4" fill="#b00000"/>
<rect x="97" y="646" width="1" height="4" fill="#b00000"/>
<rect x="129" y="646" width="1" height="4" fill="#b00000"/>
<rect x="171" y="646" width="1" height="4" fill="#b00000"/>
<rect x="200" y="646" width="1" height="4" fill="#b00000"/>
<rect x="233" y="646" width="1" height="4" fill="#b00000"/>
<rect x="264" y="646" width="1" height="4" fill="#b00000"/>
<rect x="297" y="646" width="1" height="4" fill="#b00000"/>
<rect x="338" y="646" width="1" height="4" fill="#b00000"/>
<rect x="365" y="646" width="1" height="4" fill="#b00000"/>
<rect x="388" y="646" width="1" height="4" fill="#b00000"/>
<rect x="420" y="646" width="1" height="4" fill="#b00000"/>
<rect x="446" y="646" width="1" height="4" fill="#b00000"/>
<rect x="478" y="646" width="1" height="4" fill="#b00000"/>
<rect x="536" y="646" width="1" height="4" fill="#b00000"/>
<rect x="564" y="646" width="1" height="4" fill="#b00000"/>
<rect x="593" y="646" width="1" height="4" fill="#b00000"/>
<rect x="624" y="646" width="1" height="4" fill="#b00000"/>
<rect x="655" y="646" width="1" height="4" fill="#b00000"/>
<rect x="684" y="646" width="1" height="4" fill="#b00000"/>
<rect x="719" y="646" width="1" height="4" fill="#b00000"/>
<rect x="752" y="646" width="1" height="4" fill="#b00000"/>
<rect x="791" y="646" width="1" height="4" fill="#b00000"/>
<rect x="822" y="646" width="1" height="4" fill="#b00000"/>
<rect x="863" y="646" width="1" height="4" fill="#b00000"/>
<rect x="895" y="646" width="1" height="4" fill="#b00000"/>
<rect x="927" y="646" width="1" height="4" fill="#b00000"/>
<rect x="8" y="649" width="1" height="1" fill="#c0c0c0"/>
<rect x="11" y="649" width="1" height="1" fill="#c0c0c0"/>
<rect x="16" y="649" width="1" height="1" fill="#c0c0c0"/>
<rect x="20" y="649" width="1" height="1" fill="#c0c0c0"/>
<rect x="107" y="649" width="1" height="1" fill="#c0c0c0"/>
<rect x="885" y="649" width="1" height="1" fill="#c0c0c0"/>
<rect x="48" y="649" width="1" height="1" fill="#c0c000"/>
<rect x="50" y="649" width="1" height="1" fill="#c0c000"/>
<rect x="56" y="649" width="1" height="1" fill="#c0c000"/>
<rect x="59" y="649" width="1" height="1" fill="#c0c000"/>
<rect x="86" y="649" width="1" height="1" fill="#c0c000"/>
<rect x="901" y="649" width="1" height="1" fill="#54ffff"/>
<rect x="905" y="649" width="4" height="1" fill="#54ffff"/>
<rect x="913" y="649" width="9" height="1" fill="#54ffff"/>
<rect x="5.5" y="3.5" width="11" height="10" rx="2" ry="2" fill="none" stroke="#858585" stroke-width="1.3" shape-rendering="auto"/>
<rect x="12" y="5" width="3" height="7" fill="#909090"/>
<g shape-rendering="auto"><circle cx="179" cy="29" r="6.1" fill="#808080"/><path d="M176 27.9 L179 30.7 L182 27.9" fill="none" stroke="#181818" stroke-width="1.2"/></g>
<g shape-rendering="auto"><circle cx="8" cy="405" r="6.1" fill="#808080"/><path d="M5 403.9 L8 406.7 L11 403.9" fill="none" stroke="#181818" stroke-width="1.2"/></g>
</svg>
<div style="position:absolute;left:0;top:0;width:1130px;height:650px;will-change:transform">
<div class="t" style="left:28px;top:2px;color:#cccccc"><span class="z">分时</span></div>
<div class="t" style="left:61px;top:2px;color:#cccccc">1<span class="z">分钟</span></div>
<div class="t" style="left:100px;top:2px;color:#cccccc">5<span class="z">分钟</span></div>
<div class="t" style="left:139px;top:2px;color:#cccccc">15<span class="z">分钟</span></div>
<div class="t" style="left:185px;top:2px;color:#cccccc">30<span class="z">分钟</span></div>
<div class="t" style="left:231px;top:2px;color:#cccccc">60<span class="z">分钟</span></div>
<div class="t" style="left:278px;top:2px;color:#54ffff"><span class="z">日线</span></div>
<div class="t" style="left:312px;top:2px;color:#cccccc"><span class="z">周线</span></div>
<div class="t" style="left:345px;top:2px;color:#cccccc"><span class="z">月线</span></div>
<div class="t" style="left:379px;top:2px;color:#cccccc">10<span class="z">分钟</span></div>
<div class="t" style="left:425px;top:2px;color:#cccccc">45<span class="z">日线</span></div>
<div class="t" style="left:471px;top:2px;color:#cccccc"><span class="z">季线</span></div>
<div class="t" style="left:505px;top:2px;color:#cccccc"><span class="z">年线</span></div>
<div class="t" style="left:542px;top:2px;color:#cccccc">5<span class="z">秒</span></div>
<div class="t" style="left:573px;top:2px;color:#cccccc">15<span class="z">秒</span></div>
<div class="t" style="left:606px;top:2px;color:#cccccc"><span class="z">多周期</span></div>
<div class="t" style="left:651px;top:2px;color:#cccccc"><span class="z">更多</span></div>
<div class="t" style="left:679px;top:2px;color:#cccccc">&gt;</div>
<div class="t" style="left:1050px;top:2px;color:#cccccc"><span class="z">复权</span></div>
<div class="t" style="left:1084px;top:2px;color:#cccccc"><span class="z">叠加</span></div>
<div class="t" style="left:1118px;top:2px;color:#cccccc"><span class="z">多</span></div>
<div class="t" style="left:4px;top:22px">003020 <span class="z">立方制药</span>(<span class="z">日线</span>.<span class="z">前复权</span>)</div>
<div class="t" style="left:18px;top:398px"><span class="z">股朋指标网</span></div>
<div class="t" style="left:83px;top:398px;color:#00ffff"><span class="z">趋势线</span>: 54.44</div>
<div class="t" style="left:162px;top:398px;color:#404040">: 54.44</div>
<div class="t" style="left:202px;top:398px;color:#ff00ff"><span class="z">转势</span>: 0.00</div>
<div class="t" style="left:262px;top:398px;color:#e0e0e0">K: 60.28</div>
<div class="t" style="left:312px;top:398px;color:#00ff00">: 60.28</div>
<div class="t" style="left:4px;top:632px;color:#ff3232">2024<span class="z">年</span></div>
<div class="t" style="left:220px;top:632px;color:#ff3232">1</div>
<div class="t" style="left:404px;top:632px;color:#ff3232">2</div>
<div class="t" style="left:588px;top:632px;color:#ff3232">3</div>
<div class="date"><span style="position:absolute;left:0px;top:0">2025/03/25/<span class="z">二</span></span></div>
<div class="wm"><div class="wm1">指标公式网</div><div class="wm2">www.zbgs3.com</div></div>
</div>
</body></html>
